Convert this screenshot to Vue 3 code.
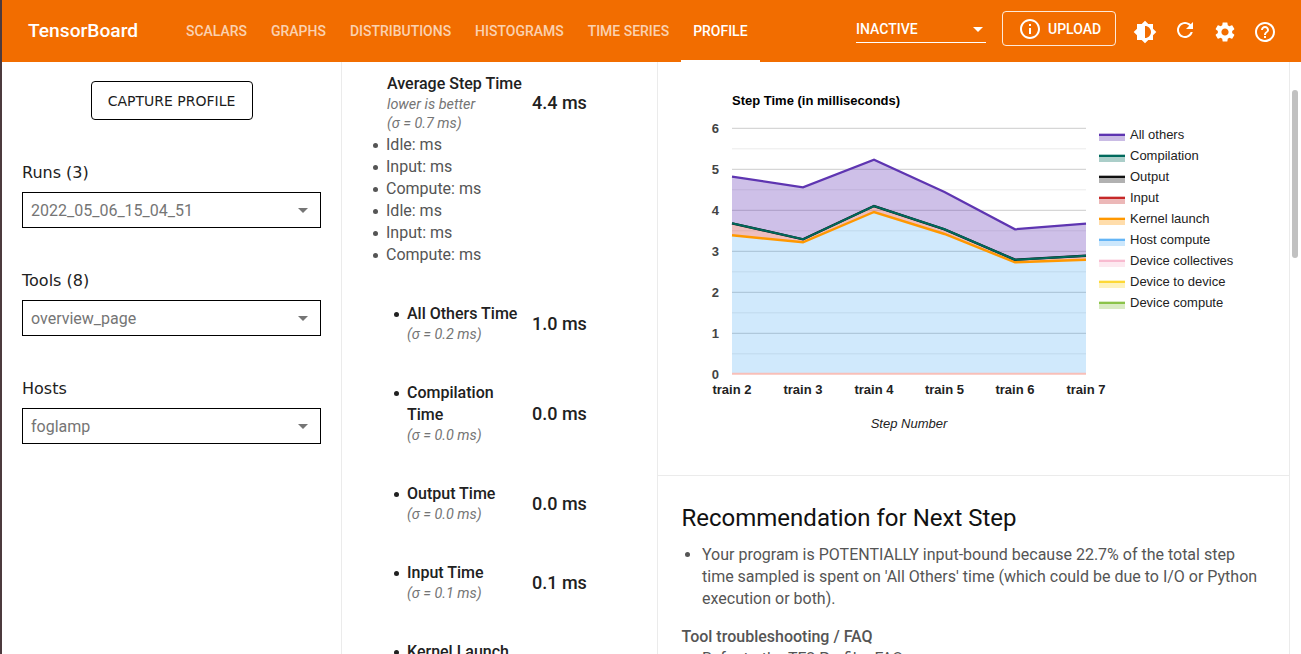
<script setup>
const tabs = ['Scalars', 'Graphs', 'Distributions', 'Histograms', 'Time Series', 'Profile']
const selects = [
  { label: 'Runs (3)', value: '2022_05_06_15_04_51' },
  { label: 'Tools (8)', value: 'overview_page' },
  { label: 'Hosts', value: 'foglamp' },
]
const breakdown = ['Idle: ms', 'Input: ms', 'Compute: ms', 'Idle: ms', 'Input: ms', 'Compute: ms']
const metrics = [
  { title: 'All Others Time', sigma: '(σ = 0.2 ms)', value: '1.0 ms' },
  { title: 'Compilation Time', sigma: '(σ = 0.0 ms)', value: '0.0 ms' },
  { title: 'Output Time', sigma: '(σ = 0.0 ms)', value: '0.0 ms' },
  { title: 'Input Time', sigma: '(σ = 0.1 ms)', value: '0.1 ms' },
  { title: 'Kernel Launch Time', sigma: '(σ = 0.1 ms)', value: '0.1 ms' },
]
const xs = [732, 803, 874, 944.5, 1015, 1086]
const purple = [176.7, 187.3, 159.7, 192, 229.3, 223.7]
const green = [223.3, 239.3, 206, 229.3, 259.7, 255.7]
const orange = [235.3, 242.3, 212, 234, 262.3, 259.7]
const line = (ys) => xs.map((x, i) => `${x},${ys[i]}`).join(' ')
const band = (top, bottom) =>
  line(top) + ' ' + xs.map((x, i) => `${x},${bottom[i]}`).reverse().join(' ')
const base = xs.map(() => 374)
const unit = 41
const majors = [6, 5, 4, 3, 2, 1].map((v) => ({ v, y: 374 - v * unit + 0.3 }))
const minors = [5.5, 4.5, 3.5, 2.5, 1.5, 0.5].map((v) => 374 - v * unit + 0.3)
const legend = [
  { name: 'All others', c: '#5e35b1' },
  { name: 'Compilation', c: '#00695c' },
  { name: 'Output', c: '#111111' },
  { name: 'Input', c: '#c62828' },
  { name: 'Kernel launch', c: '#ff9800' },
  { name: 'Host compute', c: '#64b5f6' },
  { name: 'Device collectives', c: '#f8bbd0' },
  { name: 'Device to device', c: '#fdd835' },
  { name: 'Device compute', c: '#8bc34a' },
]
</script>

<template>
  <div class="page">
    <div class="edge"></div>
    <div class="main">
      <header class="top">
        <div class="brand">TensorBoard</div>
        <nav class="tabs">
          <span v-for="t in tabs" :key="t" class="tab" :class="{ active: t === 'Profile' }">{{ t }}</span>
        </nav>
        <div class="spacer"></div>
        <div class="run">
          <span>INACTIVE</span>
          <i class="caret white"></i>
        </div>
        <div class="upload">
          <svg viewBox="0 0 24 24" class="ico"><path d="M11 7h2v2h-2zm0 4h2v6h-2zm1-9C6.48 2 2 6.48 2 12s4.48 10 10 10 10-4.48 10-10S17.52 2 12 2zm0 18c-4.41 0-8-3.59-8-8s3.59-8 8-8 8 3.59 8 8-3.59 8-8 8z"/></svg>
          <span>UPLOAD</span>
        </div>
        <div class="icons">
          <span class="ibtn"><svg viewBox="0 0 24 24" class="ico"><path d="M20 15.31L23.31 12 20 8.69V4h-4.69L12 .69 8.69 4H4v4.69L.69 12 4 15.31V20h4.69L12 23.31 15.31 20H20v-4.69zM12 18V6c3.31 0 6 2.69 6 6s-2.69 6-6 6z"/></svg></span>
          <span class="ibtn up"><svg viewBox="0 0 24 24" class="ico"><path d="M17.65 6.35C16.2 4.9 14.21 4 12 4c-4.42 0-7.99 3.58-7.99 8s3.57 8 7.99 8c3.73 0 6.84-2.55 7.73-6h-2.08c-.82 2.33-3.04 4-5.65 4-3.31 0-6-2.69-6-6s2.69-6 6-6c1.66 0 3.14.69 4.22 1.78L13 11h7V4l-2.35 2.35z"/></svg></span>
          <span class="ibtn"><svg viewBox="0 0 24 24" class="ico"><path d="M19.14 12.94c.04-.3.06-.61.06-.94 0-.32-.02-.64-.07-.94l2.03-1.58c.18-.14.23-.41.12-.61l-1.92-3.32c-.12-.22-.37-.29-.59-.22l-2.39.96c-.5-.38-1.03-.7-1.62-.94l-.36-2.54c-.04-.24-.24-.41-.48-.41h-3.84c-.24 0-.43.17-.47.41l-.36 2.54c-.59.24-1.13.57-1.62.94l-2.39-.96c-.22-.08-.47 0-.59.22L2.74 8.87c-.12.21-.08.47.12.61l2.03 1.58c-.05.3-.09.63-.09.94s.02.64.07.94l-2.03 1.58c-.18.14-.23.41-.12.61l1.92 3.32c.12.22.37.29.59.22l2.39-.96c.5.38 1.03.7 1.62.94l.36 2.54c.05.24.24.41.48.41h3.84c.24 0 .44-.17.47-.41l.36-2.54c.59-.24 1.13-.56 1.62-.94l2.39.96c.22.08.47 0 .59-.22l1.92-3.32c.12-.22.07-.47-.12-.61l-2.01-1.58zM12 15.6c-1.98 0-3.6-1.62-3.6-3.6s1.62-3.6 3.6-3.6 3.6 1.62 3.6 3.6-1.62 3.6-3.6 3.6z"/></svg></span>
          <span class="ibtn"><svg viewBox="0 0 24 24" class="ico"><path d="M11 18h2v-2h-2v2zm1-16C6.48 2 2 6.48 2 12s4.48 10 10 10 10-4.48 10-10S17.52 2 12 2zm0 18c-4.41 0-8-3.59-8-8s3.59-8 8-8 8 3.59 8 8-3.59 8-8 8zm0-14c-2.21 0-4 1.79-4 4h2c0-1.1.9-2 2-2s2 .9 2 2c0 2-3 1.75-3 5h2c0-2.25 3-2.5 3-5 0-2.21-1.79-4-4-4z"/></svg></span>
        </div>
      </header>

      <div class="body">
        <aside class="side">
          <button class="capture">CAPTURE PROFILE</button>
          <div v-for="s in selects" :key="s.label" class="field">
            <div class="label">{{ s.label }}</div>
            <div class="select">
              <span>{{ s.value }}</span>
              <i class="caret"></i>
            </div>
          </div>
        </aside>

        <section class="stats">
          <div class="row head">
            <div class="left">
              <div class="title">Average Step Time</div>
              <div class="note">lower is better</div>
              <div class="note tight">(σ = 0.7 ms)</div>
            </div>
            <div class="value">4.4 ms</div>
          </div>
          <ul class="breakdown">
            <li v-for="(b, i) in breakdown" :key="i">{{ b }}</li>
          </ul>
          <div v-for="m in metrics" :key="m.title" class="row metric">
            <ul class="left">
              <li>
                <span class="title">{{ m.title }}</span>
                <div class="note">{{ m.sigma }}</div>
              </li>
            </ul>
            <div class="value">{{ m.value }}</div>
          </div>
        </section>

        <section class="right">
          <div class="chart">
            <svg class="plot" viewBox="658 62 630 413" width="630" height="413">
              <text x="732" y="105" class="ctitle">Step Time (in milliseconds)</text>
              <line v-for="y in minors" :key="y" x1="732" x2="1086" :y1="y" :y2="y" stroke="#ebebeb" />
              <line v-for="m in majors" :key="m.v" x1="732" x2="1086" :y1="m.y" :y2="m.y" stroke="#cccccc" />
              <polygon :points="band(purple, green)" fill="#673ab7" fill-opacity="0.32" />
              <polygon :points="band(green, orange)" fill="#c62828" fill-opacity="0.3" />
              <polygon :points="band(orange, base)" fill="#2196f3" fill-opacity="0.21" />
              <line x1="732" x2="1086" y1="373.8" y2="373.8" stroke="#f8bfb8" stroke-width="2" />
              <polyline :points="line(orange)" fill="none" stroke="#ff9800" stroke-width="2.4" />
              <polyline :points="line(green)" fill="none" stroke="#111" stroke-width="2.4" />
              <polyline :points="line(green)" fill="none" stroke="#00695c" stroke-width="2" />
              <polyline :points="line(purple)" fill="none" stroke="#5e35b1" stroke-width="2.2" />
              <text v-for="m in majors" :key="'l' + m.v" x="719" :y="m.y + 4.6" class="ylab">{{ m.v }}</text>
              <text x="719" y="379" class="ylab">0</text>
              <text v-for="(x, i) in xs" :key="x" :x="x" y="394" class="xlab">train {{ i + 2 }}</text>
              <text x="909" y="428" class="xname">Step Number</text>
              <g v-for="(l, i) in legend" :key="l.name">
                <rect x="1099" :y="133 + i * 21" width="26" height="8" :fill="l.c" fill-opacity="0.33" />
                <rect x="1099" :y="134 + i * 21" width="26" height="2" :fill="l.c" />
                <text x="1130" :y="139 + i * 21" class="leg">{{ l.name }}</text>
              </g>
            </svg>
          </div>
          <div class="rec">
            <h2>Recommendation for Next Step</h2>
            <ul>
              <li>Your program is POTENTIALLY input-bound because 22.7% of the total step time sampled is spent on 'All Others' time (which could be due to I/O or Python execution or both).</li>
            </ul>
            <h3>Tool troubleshooting / FAQ</h3>
            <ul>
              <li>Refer to the TF2 Profiler FAQ</li>
            </ul>
          </div>
        </section>

        <div class="track"><div class="thumb"></div></div>
      </div>
    </div>
  </div>
</template>

<style>
html, body { margin: 0; overflow: hidden; background: #fff; }
</style>

<style scoped>
.page { display: flex; width: 1301px; height: 654px; overflow: hidden; font-family: Roboto, sans-serif; background: #fff; }
.edge { width: 2px; flex: none; background: #4c3a3e; }
.main { flex: 1; min-width: 0; display: flex; flex-direction: column; }

.top { height: 62px; flex: none; display: flex; align-items: center; background: #f26d00; color: #fff; padding-left: 26px; box-sizing: border-box; }
.brand { font-size: 19.2px; font-weight: 500; width: 146px; margin-top: -1px; }
.tabs { display: flex; height: 62px; }
.tab { display: flex; align-items: center; padding: 0 12px; font-size: 13.97px; font-weight: 500; text-transform: uppercase; color: rgba(255, 255, 255, 0.7); box-sizing: border-box; }
.tab.active { color: #fff; border-bottom: 2px solid #fff; padding-top: 2px; }
.spacer { flex: 1; }
.run { align-self: flex-start; margin-top: 12px; width: 130px; height: 30px; border-bottom: 1px solid #fff; display: flex; align-items: center; justify-content: space-between; font-size: 14px; font-weight: 500; box-sizing: content-box; }
.run span { margin-top: 4px; }
.run .caret { margin-right: 3px; margin-top: 4px; }
.upload { margin-left: 16px; width: 114px; height: 35px; border: 1px solid rgba(255, 255, 255, 0.85); border-radius: 4px; box-sizing: border-box; display: flex; align-items: center; font-size: 14px; font-weight: 500; padding-left: 15px; gap: 6px; margin-top: -5px; }
.upload span { margin-top: 1px; }
.ico { width: 24px; height: 24px; fill: #fff; display: block; }
.icons { display: flex; margin-left: 9px; margin-right: 16px; margin-top: 1px; }
.ibtn { width: 40px; height: 40px; display: flex; align-items: center; justify-content: center; box-sizing: border-box; }
.ibtn.up { padding-bottom: 3px; }

.caret { width: 0; height: 0; border-left: 5.5px solid transparent; border-right: 5.5px solid transparent; border-top: 5px solid #757575; display: block; }
.caret.white { border-top-color: #fff; }

.body { flex: 1; min-height: 0; display: flex; }
.side { width: 340px; flex: none; box-sizing: border-box; border-right: 1px solid #ebebeb; padding: 19px 20px 0 20px; font-family: "DejaVu Sans", sans-serif; }
.capture { display: block; margin: 0 auto; width: 162px; height: 39px; background: #fff; border: 1px solid #000; border-radius: 4px; font: 14px "DejaVu Sans", sans-serif; color: #1c1c1c; padding: 0; }
.field { margin-top: 43px; height: 65px; }
.label { font-size: 16px; line-height: 20px; color: #212121; margin-bottom: 9px; }
.select { height: 36px; border: 1px solid #000; box-sizing: border-box; display: flex; align-items: center; justify-content: space-between; padding: 0 12px 0 8px; font: 16px Roboto, sans-serif; color: #757575; }

.stats { width: 316px; flex: none; box-sizing: border-box; border-right: 1px solid #ebebeb; padding-top: 11px; overflow: hidden; font-size: 16px; }
.row { display: flex; align-items: center; padding-left: 45px; }
.left { width: 145px; flex: none; margin: 0; padding: 0; box-sizing: border-box; list-style: none; }
.metric { margin-top: 37px; }
.metric .left { padding-left: 20px; color: #212121; }
.metric li, .breakdown li { position: relative; }
.metric li::before, .breakdown li::before { content: ""; position: absolute; top: 9px; width: 5px; height: 5px; border-radius: 50%; background: currentColor; }
.metric li::before { left: -13.5px; }
.breakdown li::before { left: -13.5px; }
.title { font-weight: 500; line-height: 22px; color: #212121; }
.note { font-size: 14.4px; font-style: italic; line-height: 20px; color: #757575; }
.note.tight { margin-top: -1px; }
.value { font-size: 18px; font-weight: 500; color: #212121; }
.metric .value { margin-bottom: 2px; }
.head { align-items: flex-start; }
.head .value { margin-top: 19px; }
.breakdown { margin: 0; padding: 0 0 0 44px; line-height: 22px; color: #555; height: 132px; list-style: none; }

.right { flex: none; width: 631px; display: flex; flex-direction: column; min-height: 0; overflow: hidden; }
.chart { height: 414px; flex: none; border-bottom: 1px solid #ebebeb; box-sizing: border-box; }
.plot { display: block; }
.plot text { font-family: "Liberation Sans", sans-serif; font-size: 13px; }
.plot .ctitle { font-weight: 700; fill: #000; }
.plot .ylab { font-weight: 700; fill: #444; text-anchor: end; }
.plot .xlab { font-weight: 700; fill: #222; text-anchor: middle; }
.plot .xname { font-style: italic; fill: #222; text-anchor: middle; }
.plot .leg { fill: #222; }
.rec { padding: 0 24px; color: #555; font-size: 16px; line-height: 22px; }
.rec h2 { margin: 26px 0 10px -0.5px; font-size: 24px; font-weight: 400; line-height: 32px; color: #111; }
.rec ul { margin: 0; padding-left: 20px; }
.rec h3 { margin: 16px 0 0 -0.5px; font-size: 16px; font-weight: 500; line-height: 22px; color: #555; }

.track { flex: 1; border-left: 1px solid #ebebeb; padding-top: 28px; box-sizing: border-box; }
.thumb { width: 6px; height: 168px; margin-left: 2px; background: #c1c1c1; border-radius: 3px; }
</style>
